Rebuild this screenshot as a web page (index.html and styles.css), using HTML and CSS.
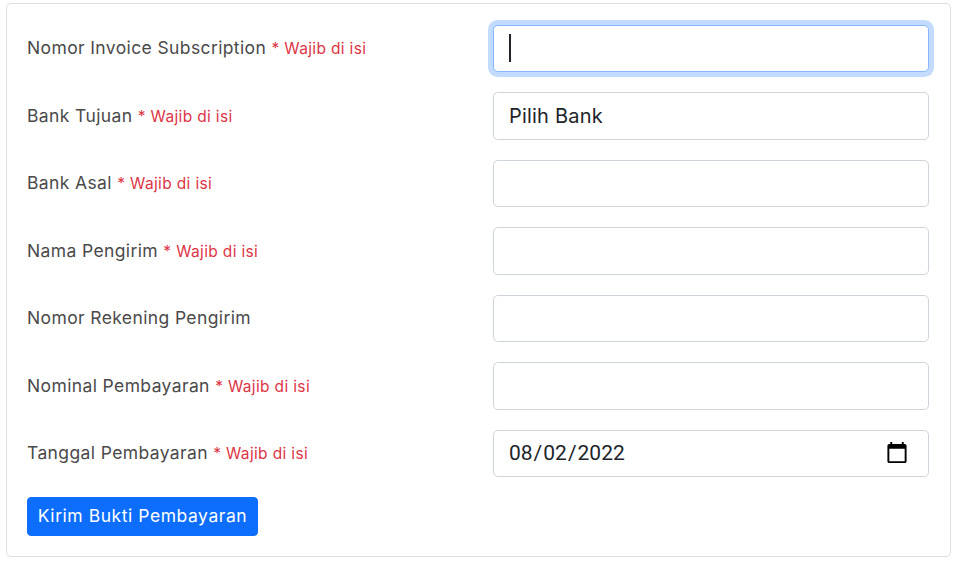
FILE: index.html
```html
<!DOCTYPE html>
<html lang="id">

<head>
    <meta charset="UTF-8">
    <meta name="viewport" content="width=device-width, initial-scale=1.0">
    <title>Konfirmasi Pembayaran</title>
    <link rel="stylesheet" href="styles.css">
</head>

<body>
    <form class="card">
        <div class="row">
            <label class="label">Nomor Invoice Subscription <span class="wajib">* <em>Wajib di isi</em></span></label>
            <div class="field">
                <input class="input focus" type="text">
                <span class="caret"></span>
            </div>
        </div>
        <div class="row">
            <label class="label">Bank Tujuan <span class="wajib">* <em>Wajib di isi</em></span></label>
            <div class="field"><input class="input" type="text" value="Pilih Bank"></div>
        </div>
        <div class="row">
            <label class="label">Bank Asal <span class="wajib">* <em>Wajib di isi</em></span></label>
            <div class="field"><input class="input" type="text"></div>
        </div>
        <div class="row">
            <label class="label">Nama Pengirim <span class="wajib">* <em>Wajib di isi</em></span></label>
            <div class="field"><input class="input" type="text"></div>
        </div>
        <div class="row">
            <label class="label">Nomor Rekening Pengirim</label>
            <div class="field"><input class="input" type="text"></div>
        </div>
        <div class="row">
            <label class="label">Nominal Pembayaran <span class="wajib">* <em>Wajib di isi</em></span></label>
            <div class="field"><input class="input" type="text"></div>
        </div>
        <div class="row">
            <label class="label">Tanggal Pembayaran <span class="wajib">* <em>Wajib di isi</em></span></label>
            <div class="field"><input class="input date" type="date" value="2022-08-02"></div>
        </div>
        <button class="btn" type="button">Kirim Bukti Pembayaran</button>
    </form>
</body>

</html>
```

FILE: styles.css
```css
* {
    margin: 0;
    padding: 0;
    box-sizing: border-box;
}

body {
    background-color: #ffffff;
    padding: 3px 6px 10px;
    font-family: Inter, "Open Sans", sans-serif;
}

.card {
    display: flex;
    flex-direction: column;
    gap: 20px;
    height: 554px;
    padding: 20.8px 21px 20px 20px;
    background-color: #ffffff;
    border: 1px solid #dfdfdf;
    border-radius: 5px;
}

.row {
    display: grid;
    grid-template-columns: 466px 436px;
    align-items: center;
    height: 47.5px;
}

.label {
    margin-top: -2px;
    color: #4a4a4a;
    font-size: 17.5px;
    letter-spacing: 0.38px;
}

.wajib {
    color: #dc3545;
    font-size: 15.5px;
    letter-spacing: 0.35px;
}

.wajib em {
    font-style: normal;
}

.field {
    position: relative;
}

.input {
    display: block;
    width: 100%;
    height: 47.5px;
    padding: 8px 15px;
    color: #212529;
    font-family: Inter, "Open Sans", sans-serif;
    font-size: 20px;
    letter-spacing: 0.2px;
    background-color: #ffffff;
    border: 1px solid #ced4da;
    border-radius: 4.8px;
    outline: none;
}

.focus {
    border-color: #86b7fe;
    box-shadow: 0 0 0 5px #c2dbfe;
}

.caret {
    position: absolute;
    left: 16px;
    top: 9px;
    width: 2px;
    height: 28px;
    background-color: #212529;
}

.date {
    padding: 7px 15px 9px 14px;
    font-family: Roboto, sans-serif;
    font-size: 21px;
    letter-spacing: 0;
}

.date::-webkit-calendar-picker-indicator {
    width: 24px;
    height: 24px;
    margin-right: 4px;
    padding: 0;
}

.btn {
    align-self: flex-start;
    width: 231px;
    height: 39px;
    padding-bottom: 2px;
    color: #ffffff;
    font-family: Inter, "Open Sans", sans-serif;
    font-size: 17.5px;
    letter-spacing: 0.55px;
    background-color: #0d6efd;
    border: 1px solid #0d6efd;
    border-radius: 4px;
}
```
